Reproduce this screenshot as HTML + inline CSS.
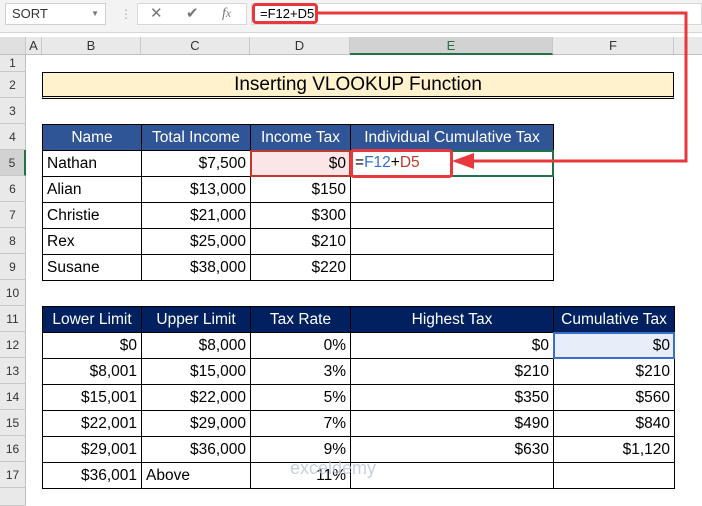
<!DOCTYPE html>
<html><head><meta charset="utf-8"><style>
*{box-sizing:border-box;margin:0;padding:0}
body{width:702px;height:506px;overflow:hidden;background:#fff;font-family:"Liberation Sans",sans-serif;position:relative}
.a{position:absolute}
.top{left:0;top:0;width:702px;height:33px;background:#f3f3f3;border-bottom:1px solid #d4d4d4}
.colh{top:37px;height:18px;background:#e9e9e9;border-bottom:1px solid #bfbfbf;font-size:13px;color:#333;text-align:center;line-height:18px;border-right:1px solid #c8c8c8}
.rowh{left:0;width:26px;background:#e9e9e9;border-bottom:1px solid #c8c8c8;border-right:1px solid #bfbfbf;font-size:12px;color:#333;text-align:center}
.c{font-size:15.5px;border:1px solid #000;padding:0 4px;white-space:nowrap;overflow:hidden;display:flex;align-items:center}
.r{justify-content:flex-end}
.h1{background:#2f5597;color:#fff;justify-content:center}
.h2{background:#002060;color:#fff;justify-content:center}
</style></head><body>
<div class="a top"></div>
<div class="a" style="left:5px;top:3px;width:101px;height:22px;background:#fff;border:1px solid #d0d0d0;font-size:13px;line-height:20px;padding-left:6px;color:#333">SORT<span style="position:absolute;right:6px;top:0;font-size:8px;color:#777">▼</span></div>
<div class="a" style="left:120px;top:7px;color:#aaa;font-size:12px">⋮</div>
<div class="a" style="left:137px;top:3px;width:110px;height:22px;background:#fff;border:1px solid #d8d8d8;color:#777;font-size:15px;line-height:20px"><span style="position:absolute;left:12px">✕</span><span style="position:absolute;left:48px">✔</span><span style="position:absolute;left:84px;font-style:italic;font-family:'Liberation Serif',serif;font-size:14px">f<small>x</small></span></div>
<div class="a" style="left:251px;top:3px;width:451px;height:22px;background:#fff;border:1px solid #d8d8d8"></div>
<div class="a" style="left:252px;top:3px;width:66px;height:21px;border:3px solid #e8383d;border-radius:4px;font-size:13px;line-height:15px;padding-left:5px;color:#000">=F12+D5</div>
<div class="a" style="left:0;top:33px;width:702px;height:4px;background:#fff"></div>
<div class="a colh" style="left:0;width:26px;background:#e0e0e0"></div>
<div class="a colh" style="left:26px;width:16px">A</div>
<div class="a colh" style="left:42px;width:99px">B</div>
<div class="a colh" style="left:141px;width:109px">C</div>
<div class="a colh" style="left:250px;width:100px">D</div>
<div class="a colh" style="left:350px;width:203px;background:#d2d2d2;border-bottom:2px solid #217346;color:#217346">E</div>
<div class="a colh" style="left:553px;width:121px">F</div>
<div class="a colh" style="left:674px;width:28px;border-right:none"></div>
<div class="a rowh" style="top:55px;height:17px;line-height:17px">1</div>
<div class="a rowh" style="top:72px;height:26px;line-height:26px">2</div>
<div class="a rowh" style="top:98px;height:26px;line-height:26px">3</div>
<div class="a rowh" style="top:124px;height:26px;line-height:26px">4</div>
<div class="a rowh" style="top:150px;height:26px;line-height:26px;background:#d2d2d2;border-right:2px solid #217346">5</div>
<div class="a rowh" style="top:176px;height:26px;line-height:26px">6</div>
<div class="a rowh" style="top:202px;height:26px;line-height:26px">7</div>
<div class="a rowh" style="top:228px;height:26px;line-height:26px">8</div>
<div class="a rowh" style="top:254px;height:26px;line-height:26px">9</div>
<div class="a rowh" style="top:280px;height:26px;line-height:26px">10</div>
<div class="a rowh" style="top:306px;height:26px;line-height:26px">11</div>
<div class="a rowh" style="top:332px;height:26px;line-height:26px">12</div>
<div class="a rowh" style="top:358px;height:26px;line-height:26px">13</div>
<div class="a rowh" style="top:384px;height:26px;line-height:26px">14</div>
<div class="a rowh" style="top:410px;height:26px;line-height:26px">15</div>
<div class="a rowh" style="top:436px;height:26px;line-height:26px">16</div>
<div class="a rowh" style="top:462px;height:26px;line-height:26px">17</div>
<div class="a rowh" style="top:488px;height:18px"></div>

<div class="a c" style="left:42px;top:72px;width:632px;height:27px;background:#fff2cc;justify-content:center;font-size:19px;border-bottom:3px double #000">Inserting VLOOKUP Function</div>

<div id="t1"></div>
<script>
function cell(x,y,w,h,t,cls,st){var d=document.createElement('div');d.className='a c '+(cls||'');d.style.cssText='left:'+x+'px;top:'+y+'px;width:'+(w+1)+'px;height:'+(h+1)+'px;'+(st||'');d.textContent=t;document.body.appendChild(d);}
var X1=[42,141,250,350,553];
var hd=['Name','Total Income','Income Tax','Individual Cumulative Tax'];
for(var i=0;i<4;i++)cell(X1[i],124,X1[i+1]-X1[i],26,hd[i],'h1');
var d1=[['Nathan','$7,500','$0'],['Alian','$13,000','$150'],['Christie','$21,000','$300'],['Rex','$25,000','$210'],['Susane','$38,000','$220']];
for(var r=0;r<5;r++){var y=150+r*26;cell(42,y,99,26,d1[r][0]);cell(141,y,109,26,d1[r][1],'r');cell(250,y,100,26,d1[r][2],'r',r==0?'background:#fbe5e6':'');cell(350,y,203,26,'');}
var X2=[42,141,250,350,553,674];
var h2=['Lower Limit','Upper Limit','Tax Rate','Highest Tax','Cumulative Tax'];
for(var i=0;i<5;i++)cell(X2[i],306,X2[i+1]-X2[i],26,h2[i],'h2');
var d2=[['$0','$8,000','0%','$0','$0'],['$8,001','$15,000','3%','$210','$210'],['$15,001','$22,000','5%','$350','$560'],['$22,001','$29,000','7%','$490','$840'],['$29,001','$36,000','9%','$630','$1,120'],['$36,001','Above','11%','','']];
for(var r=0;r<6;r++){var y=332+r*26;for(var i=0;i<5;i++){cell(X2[i],y,X2[i+1]-X2[i],26,d2[r][i],(r==5&&i==1)?'':'r',(r==0&&i==4)?'background:#e8eef9':'');}}
</script>
<div class="a" style="left:250px;top:150px;width:101px;height:27px;border:2px solid #c0392b"></div>
<div class="a" style="left:350px;top:150px;width:204px;height:27px;border:2px solid #217346;background:#fff;font-size:15.5px;padding-left:3px;line-height:22px">=<span style="color:#2e6fd8">F12</span>+<span style="color:#c0392b">D5</span></div>
<div class="a" style="left:553px;top:332px;width:122px;height:27px;border:2px solid #3a6fc9"></div>
<div class="a" style="left:350px;top:149px;width:103px;height:29px;border:3px solid #e8383d;border-radius:4px"></div>
<svg class="a" style="left:0;top:0" width="702" height="506">
<polyline points="318,13 686,13 686,161 470,161" fill="none" stroke="#e8383d" stroke-width="3"/>
<polygon points="452,161 474,153 474,169" fill="#e8383d"/>
</svg>
<div class="a" style="left:290px;top:458px;font-size:18px;color:#b8c4dc;opacity:.8">exceldemy</div>
</body></html>
